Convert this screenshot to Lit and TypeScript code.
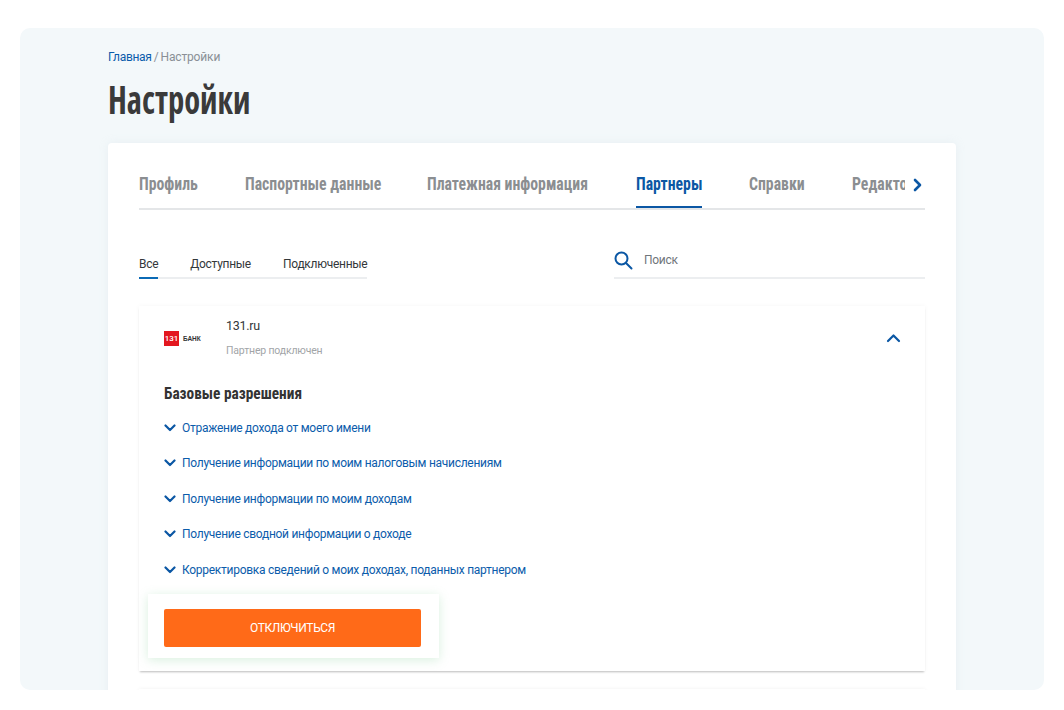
import { LitElement, html, css, svg } from "lit";
import { customElement } from "lit/decorators.js";

const TABS: [string, number][] = [["Профиль", 59], ["Паспортные данные", 135], ["Платежная информация", 162], ["Партнеры", 66], ["Справки", 56], ["Редактор профиля", 130]];
const SUBS = ["Все", "Доступные", "Подключенные"];
const PERMS = [
  "Отражение дохода от моего имени",
  "Получение информации по моим налоговым начислениям",
  "Получение информации по моим доходам",
  "Получение сводной информации о доходе",
  "Корректировка сведений о моих доходах, поданных партнером",
];
const chev = (d: string, w: number, h: number, vb: string, sw = 2.2) =>
  html`<svg width=${w} height=${h} viewBox=${vb} fill="none" stroke="#0b57a4" stroke-width=${sw} stroke-linecap="round" stroke-linejoin="round">${svg`<path d=${d}></path>`}</svg>`;

@customElement("app-root")
export class AppRoot extends LitElement {
  static styles = css`
    :host { display: block; height: 710px; overflow: hidden; background: #fff; padding: 28px 20px 20px; box-sizing: border-box; font-family: Roboto, "Noto Sans", sans-serif; letter-spacing: -0.28px; }
    .panel { height: 662px; box-sizing: border-box; background: #f3f8fa; border-radius: 10px; padding: 0 88px; overflow: hidden; }
    .crumbs { padding-top: 21px; height: 16px; line-height: 16px; font-size: 12px; letter-spacing: -0.15px; color: #8a9096; display: flex; gap: 2px; }
    .crumbs a { color: #0b5cab; letter-spacing: -0.28px; }
    h1 { margin: 11px 0 0; height: 67px; font: 700 39px/46px "Open Sans", sans-serif; font-stretch: 75%; color: #3a3a3a; letter-spacing: 0; }
    h1 span { display: inline-block; transform-origin: 0 50%; transform: scaleX(.835); }
    .card { background: #fff; border-radius: 4px 4px 0 0; height: 560px; padding: 0 31px; box-shadow: 0 0 8px rgba(200,215,225,.25); }
    .tabs { display: flex; align-items: stretch; height: 67px; border-bottom: 2px solid #e4e6e8; box-sizing: border-box; position: relative; }
    .tabs-scroll { display: flex; gap: 47px; width: 766px; overflow: hidden; height: 67px; }
    .tab { flex: none; padding-top: 29px; height: 65px; margin-bottom: -2px; box-sizing: border-box; font: 700 18px/24px Roboto, sans-serif; font-stretch: 75%; color: #8b8e91; white-space: nowrap; letter-spacing: 0; border-bottom: 2px solid transparent; }
    .tab span { display: inline-block; transform-origin: 0 50%; transform: scaleX(.875); }
    .tab.on { color: #0b57a4; border-bottom-color: #0b57a4; }
    .tabs > svg { margin: 35px 0 0 8px; }
    .filters { display: flex; justify-content: space-between; height: 96px; }
    .subs { display: flex; gap: 32px; align-self: flex-start; margin-top: 42px; border-bottom: 2px solid #eceef0; height: 27px; box-sizing: border-box; }
    .sub { font-size: 12px; line-height: 24px; height: 27px; box-sizing: border-box; color: #33373a; border-bottom: 2px solid transparent; }
    .sub.on { border-bottom-color: #0b6ab5; }
    .search { width: 311px; height: 26px; margin-top: 41px; display: flex; align-items: flex-start; gap: 11px; border-bottom: 2px solid #eceef0; color: #70767b; font-size: 12px; line-height: 18px; }
    .partner { height: 365px; box-sizing: border-box; padding: 0 25px; background: #fff; box-shadow: 0 2px 2px -1px rgba(0,0,0,.25), 0 0 5px rgba(0,0,0,.04); position: relative; }
    .head { display: flex; height: 73px; align-items: flex-start; }
    .logo { width: 62px; margin-top: 25px; display: flex; align-items: center; gap: 4px; }
    .mark { width: 15px; height: 15px; background: #e3171f; color: #fff; font: 500 8px/15px Roboto, sans-serif; letter-spacing: 0; text-align: center; }
    .bank { font: 700 6.5px/15px "Liberation Sans", sans-serif; letter-spacing: 0; color: #333; }
    .names { flex: 1; }
    .name { margin-top: 12px; font-size: 12.5px; line-height: 16px; color: #33373a; }
    .status { margin-top: 10px; font-size: 10.5px; line-height: 14px; letter-spacing: -0.18px; color: #a2a5a8; }
    .head > svg { margin: 27px -1px 0 0; }
    h2 { margin: 3px 0 0; font: 700 16.5px/24px Roboto, sans-serif; font-stretch: 75%; letter-spacing: 0; color: #333; height: 27px; }
    h2 span { display: inline-block; transform-origin: 0 50%; transform: scaleX(.93); }
    .perms { margin-top: 1px; }
    .perm { display: flex; align-items: center; gap: 6px; height: 35.5px; color: #0b5cab; font-size: 12px; white-space: nowrap; }
    .btn-wrap { position: absolute; left: 9px; top: 288px; width: 291px; height: 64px; box-sizing: border-box; padding: 15px 16px 0; background: #fff; box-shadow: 0 2px 10px rgba(120,200,140,.28); }
    .btn { width: 257px; height: 38px; background: #ff6a18; border-radius: 2px; color: #fff; font-size: 12px; letter-spacing: -0.35px; line-height: 38px; text-align: center; }
    .next { height: 40px; margin-top: 18px; box-shadow: 0 0 4px rgba(0,0,0,.06); }
  `;

  render() {
    return html`
      <div class="panel">
        <div class="crumbs"><a>Главная</a><span>/</span><span>Настройки</span></div>
        <h1><span>Настройки</span></h1>
        <div class="card">
          <div class="tabs">
            <div class="tabs-scroll">
              ${TABS.map(([t, w], i) => html`<div class="tab ${i === 3 ? "on" : ""}" style="width:${w}px"><span>${t}</span></div>`)}
            </div>
            ${chev("M2 2l5 5-5 5", 9, 14, "0 0 9 14", 2.6)}
          </div>
          <div class="filters">
            <div class="subs">
              ${SUBS.map((t, i) => html`<div class="sub ${i === 0 ? "on" : ""}">${t}</div>`)}
            </div>
            <div class="search">
              <svg width="19" height="19" viewBox="0 0 19 19" fill="none" stroke="#0b57a4" stroke-width="2" stroke-linecap="round"><circle cx="7.5" cy="7.5" r="6"></circle><path d="M12 12l5.5 5.5"></path></svg>
              <span>Поиск</span>
            </div>
          </div>
          <div class="partner">
            <div class="head">
              <div class="logo"><div class="mark">131</div><div class="bank">БАНК</div></div>
              <div class="names">
                <div class="name">131.ru</div>
                <div class="status">Партнер подключен</div>
              </div>
              ${chev("M2 8l5.5-5.5L13 8", 15, 10, "0 0 15 10")}
            </div>
            <h2><span>Базовые разрешения</span></h2>
            <div class="perms">
              ${PERMS.map(p => html`<div class="perm">${chev("M1.5 1.5L6 6l4.5-4.5", 12, 8, "0 0 12 8")}<span>${p}</span></div>`)}
            </div>
            <div class="btn-wrap"><div class="btn">ОТКЛЮЧИТЬСЯ</div></div>
          </div>
          <div class="next"></div>
        </div>
      </div>
    `;
  }
}
